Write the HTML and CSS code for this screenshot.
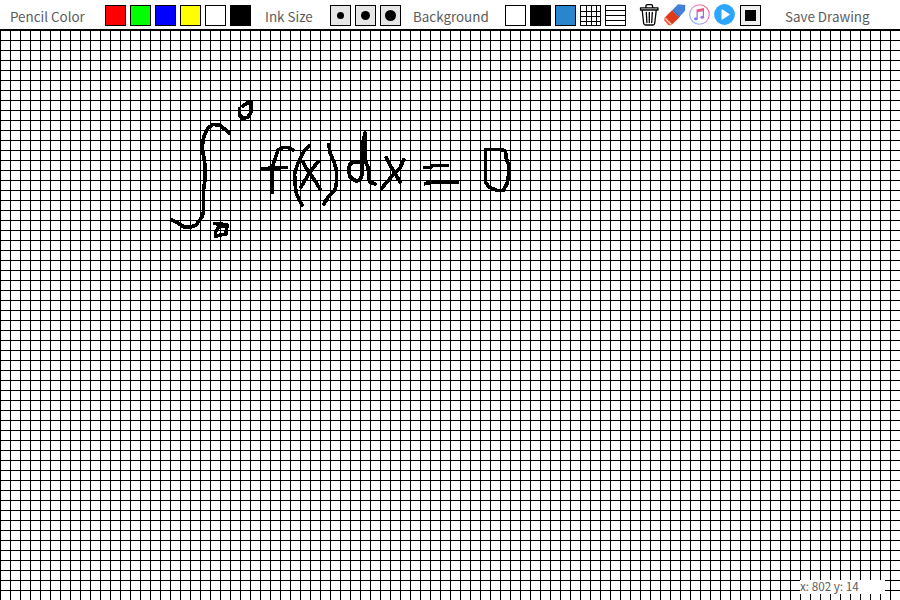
FILE: index.html
```html
<!DOCTYPE html>
<html lang="en">
<head>
<meta charset="utf-8">
<title>Sketch Pad</title>
<link rel="stylesheet" href="styles.css">
</head>
<body>
<header class="toolbar">
  <span class="label pencil">Pencil Color</span>
  <div class="group colors">
    <i class="box red"></i><i class="box green"></i><i class="box blue"></i><i class="box yellow"></i><i class="box white"></i><i class="box black"></i>
  </div>
  <span class="label ink">Ink Size</span>
  <div class="group sizes">
    <i class="box size"><b class="dot small"></b></i><i class="box size"><b class="dot medium"></b></i><i class="box size"><b class="dot large"></b></i>
  </div>
  <span class="label background">Background</span>
  <div class="group backgrounds">
    <i class="box white"></i><i class="box black"></i><i class="box sky"></i>
    <svg width="21" height="21" shape-rendering="crispEdges"><path d="M.5.5h20v20H.5zM6.5 0v21M11.5 0v21M16.5 0v21M0 6.5h21M0 11.5h21M0 16.5h21" fill="#fff" stroke="#000"/></svg>
    <svg width="21" height="21" shape-rendering="crispEdges"><path d="M.5.5h20v20H.5zM0 5.5h21M0 10.5h21M0 15.5h21" fill="#fff" stroke="#000"/></svg>
  </div>
  <div class="group tools">
    <svg width="21" height="23" viewBox="0 0 21 23" fill="none" stroke="#000" stroke-width="1.3" stroke-linecap="round" stroke-linejoin="round"><path d="M3.200 6.500 4.700 19.500q.2 1.500 1.800 1.500h7.400q1.600 0 1.800-1.500l1.500-13M1.500 3.800h17.500v2.200H1.500zM6.900 3.500V2.200q0-1.500 1.600-1.500h3.500q1.600 0 1.600 1.500v1.300M7.300 8.500l.6 10M10.300 8.500v10M13.300 8.500l-.6 10"/></svg>
    <svg class="eraser" width="22" height="23" viewBox="0 0 22 23"><path d="M14 .2 21.200 1V6.500L15 13.500 8 6.500z" fill="#447fd8"/><path d="M8 6.300 15.300 13.500 8 20.500 1 13.200z" fill="#df3b1b"/><path d="m9 6 7 7" fill="none" stroke="#275daf" stroke-width=".6"/><path d="M1 13.200 8 20.500 7 21.200H4.500L.3 16.500v-2.500z" fill="#f05b40"/><path d="m1.300 14.300 6 6" stroke="#ffd8ce" stroke-width="1.200"/></svg>
    <svg class="music" width="21" height="21" viewBox="0 0 21 21"><defs><linearGradient id="ring" x1="0" y1="1" x2="1" y2="0"><stop stop-color="#49c6fa"/><stop offset=".5" stop-color="#d98ad9"/><stop offset="1" stop-color="#ff5365"/></linearGradient><linearGradient id="note" x1="0" y1="0" x2="0" y2="1"><stop stop-color="#fa5275"/><stop offset="1" stop-color="#7185ed"/></linearGradient></defs><circle cx="10.500" cy="10.500" r="9.800" fill="#fff" stroke="url(#ring)" stroke-width="1.100"/><path d="M7.500 5.500 15 4v9.500H13.800V7.200L8.700 8.300v6.500H7.500z" fill="url(#note)"/><ellipse cx="6.900" cy="14.700" rx="1.900" ry="1.500" fill="#7c7de6"/><ellipse cx="13.200" cy="13.300" rx="1.900" ry="1.500" fill="#a673d8"/></svg>
    <svg class="play" width="21" height="21" viewBox="0 0 21 21"><circle cx="10.500" cy="10.500" r="10.400" fill="#2ba6fb"/><path d="M8 5.700v9.600l7.400-4.800z" fill="#fff" stroke="#fff" stroke-linejoin="round"/></svg>
    <i class="box stop"><b></b></i>
  </div>
  <span class="label save">Save Drawing</span>
</header>
<main class="board">
  <svg class="drawing" width="900" height="570" viewBox="0 30 900 570">
    <path d="M172 220 178 223 184 227 191 227 196 225 202 217 203.500 212V190L205 180V165L203 152 202 147 204 136 208 128 213 124.500 220 125 229 133"/>
    <path d="M243 106 247 103 251 102V112L248 117 243 118.500 239.500 115V109"/>
    <path d="M214.500 223.500 220 224 227 225 226 234 220 235 215.500 236.500V232L219 227 223 226"/>
    <path d="M262 169 271 168 286 167.500M272 192V168L275 159 278 150 283 147.500H288L293 150"/>
    <path d="M309 146 304 151 298 163 294.500 174 295.500 188 296.500 194 302 205M303 162 306 168 314 179 320 189M318 162 312 169 307 177 301 187M329 145 330 153 334 162 336.500 170V182L335 190 328 197 324 204"/>
    <path d="M361 162H354L350 164 348.500 170 350 177 356 181 360 180 362 175V150L365 133V160L368 167 369.500 182 375 184M363 142V162"/>
    <path d="M386.500 158 390 165 400 182M403.500 160 400 168 394 174 386 183 382 188"/>
    <path d="M425 167.500H430L433 165.500H447M426 183.500 431 182.500H457"/>
    <path d="M485.500 150V182L489 187 497 190.500H503L507 184 509 173V165L506 158 505.500 151 501 149.500H486"/>
  </svg>
  <output class="coords">x: 802 y: 14</output>
</main>
</body>
</html>
```
FILE: styles.css
```css
body {
  margin: 0;
  overflow: hidden;
  font-family: "Noto Sans CJK SC", sans-serif;
  color: #5c5c5c;
  background: #fff;
}
.toolbar {
  display: flex;
  height: 29px;
  padding-left: 10px;
  border-bottom: 1px solid #000;
}
.label {
  box-sizing: border-box;
  flex: none;
  padding-top: 5px;
  font-size: 13.4px;
  line-height: 22px;
  white-space: nowrap;
}
.pencil { width: 95px; }
.ink { width: 65px; }
.background { width: 92px; }
.group {
  display: flex;
  flex: none;
  gap: 4px;
  padding-top: 5px;
}
.colors { margin-right: 14px; }
.sizes { margin-right: 12px; }
.backgrounds { margin-right: 13px; }
.tools { margin-right: 24px; padding-top: 4px; }
.box {
  display: flex;
  box-sizing: border-box;
  width: 21px;
  height: 21px;
  align-items: center;
  justify-content: center;
  border: 1px solid #000;
}
.red { background: #f00; }
.green { background: #0f0; }
.blue { background: #00f; }
.yellow { background: #ff0; }
.white { background: #fff; }
.black { background: #000; }
.sky { background: #2986cc; }
.size { background: #e6e6e6; }
.dot { border-radius: 50%; background: #000; }
.small { width: 7px; height: 7px; }
.medium { width: 9px; height: 9px; }
.large { width: 11px; height: 11px; }
.eraser { margin-right: -1px; }
.stop { margin: 1px 0 0 1px; background: #f0f0f0; }
.stop b { width: 11px; height: 11px; background: #000; }
.board {
  position: relative;
  height: 570px;
  background-image:
    linear-gradient(90deg, #000 1px, transparent 1px),
    linear-gradient(#000 1px, transparent 1px);
  background-size: 10px 10px;
}
.drawing {
  display: block;
  fill: none;
  stroke: #000;
  stroke-width: 3.7;
  stroke-linecap: square;
  stroke-linejoin: round;
  shape-rendering: crispEdges;
}
.coords {
  position: absolute;
  left: 800px;
  top: 550px;
  width: 85px;
  height: 14px;
  background: #fff;
  font-size: 11.7px;
  line-height: 12px;
}
```
